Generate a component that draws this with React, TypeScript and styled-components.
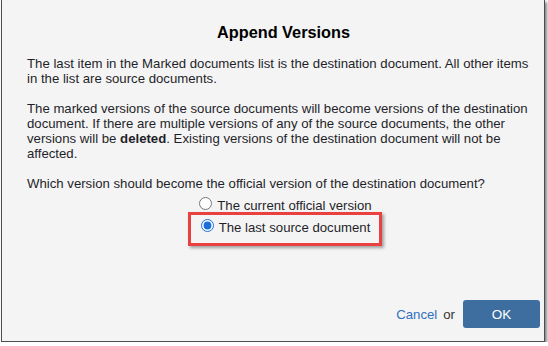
import React, { useState } from 'react';
import styled, { createGlobalStyle } from 'styled-components';

const GlobalStyle = createGlobalStyle`
  html, body {
    margin: 0;
    padding: 0;
    background: #ffffff;
  }
  body {
    font-family: Arial, "Liberation Sans", sans-serif;
  }
`;

const Dialog = styled.div`
  position: relative;
  box-sizing: border-box;
  width: 544px;
  height: 342px;
  margin-left: 1px;
  padding: 23px 4px 13px 25px;
  background-color: #f4f4f4;
  border: 1px solid #4d4d4d;
  border-top: none;
  box-shadow: 2px 2px 3px rgba(0, 0, 0, 0.5);
  display: flex;
  flex-direction: column;
  color: #1f1f2a;
`;

const Title = styled.h2`
  margin: 0;
  font-size: 16.3px;
  line-height: 19px;
  font-weight: bold;
  text-align: center;
  color: #000;
`;

const Paragraph = styled.p`
  margin: 14px 0 0;
  font-size: 13.2px;
  line-height: 15.3px;
`;

const Strong = styled.span`
  font-weight: bold;
`;

const RadioGroup = styled.div`
  margin-top: 3px;
  display: flex;
  flex-direction: column;
  align-items: center;
`;

const RadioRow = styled.label`
  display: block;
  font-size: 13.2px;
  line-height: 20px;
  white-space: nowrap;
  cursor: pointer;

  input {
    width: 13px;
    height: 13px;
    margin: 3px 5px 0 4px;
    accent-color: #1a6fd8;
  }
`;

const Highlight = styled.div`
  position: absolute;
  left: 186px;
  top: 212px;
  width: 194px;
  height: 34px;
  box-sizing: border-box;
  border: 3px solid #e8413f;
  box-shadow: 2px 2px 3px rgba(0, 0, 0, 0.35);
  pointer-events: none;
`;

const Footer = styled.div`
  margin-top: auto;
  display: flex;
  justify-content: flex-end;
  align-items: center;
  font-size: 13.2px;
`;

const CancelLink = styled.a`
  color: #2f6fc0;
  text-decoration: none;
  cursor: pointer;
`;

const OrText = styled.span`
  margin: 0 8px 0 6px;
  color: #333;
`;

const OkButton = styled.button`
  width: 77px;
  height: 28px;
  border: none;
  border-radius: 3px;
  background-color: #3d6e9f;
  color: #fff;
  font-family: Arial, "Liberation Sans", sans-serif;
  font-size: 13.5px;
  cursor: pointer;
`;

const App: React.FC = () => {
  const [choice, setChoice] = useState('source');

  return (
    <>
      <GlobalStyle />
      <Dialog>
        <Title>Append Versions</Title>
        <Paragraph>
          The last item in the Marked documents list is the destination document. All other items in the list are source documents.
        </Paragraph>
        <Paragraph>
          The marked versions of the source documents will become versions of the destination document. If there are multiple versions of any of the source documents, the other versions will be <Strong>deleted</Strong>. Existing versions of the destination document will not be affected.
        </Paragraph>
        <Paragraph>Which version should become the official version of the destination document?</Paragraph>
        <RadioGroup>
          <RadioRow>
            <input type="radio" name="official" checked={choice === 'current'} onChange={() => setChoice('current')} />
            The current official version
          </RadioRow>
          <RadioRow>
            <input type="radio" name="official" checked={choice === 'source'} onChange={() => setChoice('source')} />
            The last source document
          </RadioRow>
        </RadioGroup>
        <Highlight />
        <Footer>
          <CancelLink>Cancel</CancelLink>
          <OrText>or</OrText>
          <OkButton>OK</OkButton>
        </Footer>
      </Dialog>
    </>
  );
};

export default App;
